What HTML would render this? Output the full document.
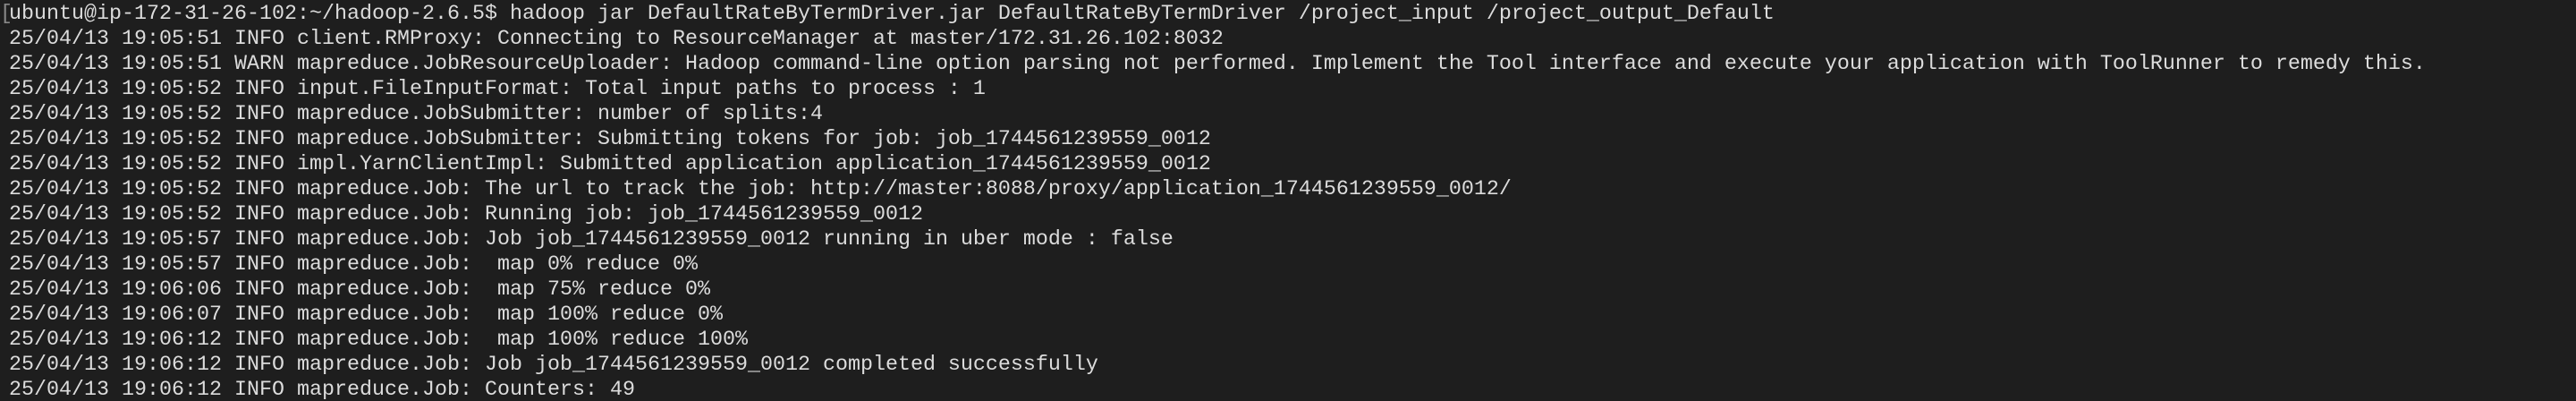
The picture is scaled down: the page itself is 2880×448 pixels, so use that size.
<!DOCTYPE html>
<html><head><meta charset="utf-8"><style>
html,body{margin:0;padding:0;background:#1e1e1e;width:2880px;height:448px;overflow:hidden}
pre{margin:0;padding:2px 0 0 10px;font-family:"Liberation Mono",monospace;font-size:23.33px;line-height:28px;color:#dcdcdc;white-space:pre;position:relative}
.b{position:absolute;left:0;top:2px;color:#888}
</style></head><body><pre><span class="b">[</span>ubuntu@ip-172-31-26-102:~/hadoop-2.6.5$ hadoop jar DefaultRateByTermDriver.jar DefaultRateByTermDriver /project_input /project_output_Default
25/04/13 19:05:51 INFO client.RMProxy: Connecting to ResourceManager at master/172.31.26.102:8032
25/04/13 19:05:51 WARN mapreduce.JobResourceUploader: Hadoop command-line option parsing not performed. Implement the Tool interface and execute your application with ToolRunner to remedy this.
25/04/13 19:05:52 INFO input.FileInputFormat: Total input paths to process : 1
25/04/13 19:05:52 INFO mapreduce.JobSubmitter: number of splits:4
25/04/13 19:05:52 INFO mapreduce.JobSubmitter: Submitting tokens for job: job_1744561239559_0012
25/04/13 19:05:52 INFO impl.YarnClientImpl: Submitted application application_1744561239559_0012
25/04/13 19:05:52 INFO mapreduce.Job: The url to track the job: http://master:8088/proxy/application_1744561239559_0012/
25/04/13 19:05:52 INFO mapreduce.Job: Running job: job_1744561239559_0012
25/04/13 19:05:57 INFO mapreduce.Job: Job job_1744561239559_0012 running in uber mode : false
25/04/13 19:05:57 INFO mapreduce.Job:  map 0% reduce 0%
25/04/13 19:06:06 INFO mapreduce.Job:  map 75% reduce 0%
25/04/13 19:06:07 INFO mapreduce.Job:  map 100% reduce 0%
25/04/13 19:06:12 INFO mapreduce.Job:  map 100% reduce 100%
25/04/13 19:06:12 INFO mapreduce.Job: Job job_1744561239559_0012 completed successfully
25/04/13 19:06:12 INFO mapreduce.Job: Counters: 49</pre></body></html>
